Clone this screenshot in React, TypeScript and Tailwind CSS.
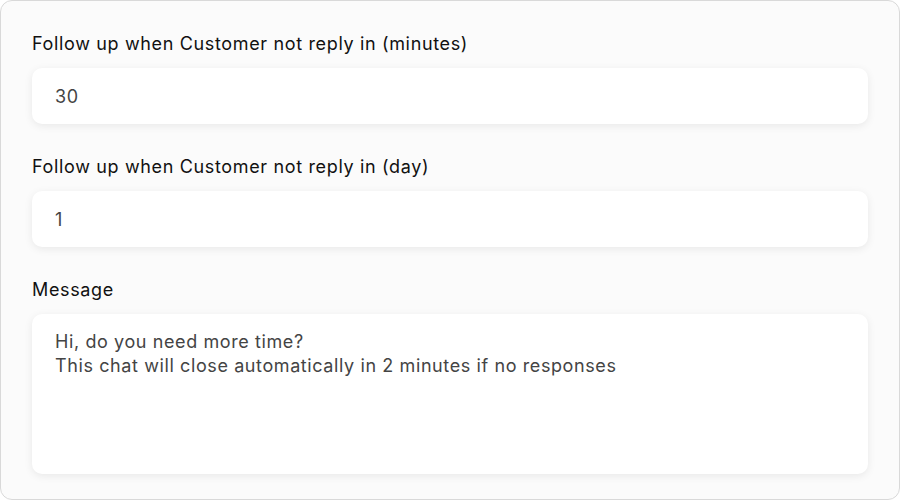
export default function App() {
  const font = { fontFamily: "Inter, 'Noto Sans', sans-serif" };
  return (
    <div className="w-[900px] h-[500px] bg-white" style={font}>
      <div className="h-full rounded-[12px] border border-[#d9d9d9] bg-[#fbfbfb] px-[31px] pt-[31px] flex flex-col">
        <label className="block text-[18px] tracking-[0.65px] leading-6 text-[#111]">
          Follow up when Customer not reply in (minutes)
        </label>
        <input
          defaultValue="30"
          className="mt-3 h-[56px] w-full rounded-[10px] bg-white px-[23px] text-[18px] tracking-[0.6px] text-[#444] outline-none shadow-[0_2px_8px_rgba(0,0,0,0.08)]"
        />
        <label className="mt-[31px] block text-[18px] tracking-[0.65px] leading-6 text-[#111]">
          Follow up when Customer not reply in (day)
        </label>
        <input
          defaultValue="1"
          className="mt-3 h-[56px] w-full rounded-[10px] bg-white px-[23px] text-[18px] tracking-[0.6px] text-[#444] outline-none shadow-[0_2px_8px_rgba(0,0,0,0.08)]"
        />
        <label className="mt-[31px] block text-[18px] tracking-[0.65px] leading-6 text-[#111]">Message</label>
        <textarea
          defaultValue={"Hi, do you need more time?\nThis chat will close automatically in 2 minutes if no responses"}
          className="mt-3 h-[160px] w-full resize-none rounded-[10px] bg-white px-[23px] py-4 text-[18px] tracking-[0.6px] leading-6 text-[#444] outline-none shadow-[0_2px_8px_rgba(0,0,0,0.08)]"
        />
      </div>
    </div>
  );
}
